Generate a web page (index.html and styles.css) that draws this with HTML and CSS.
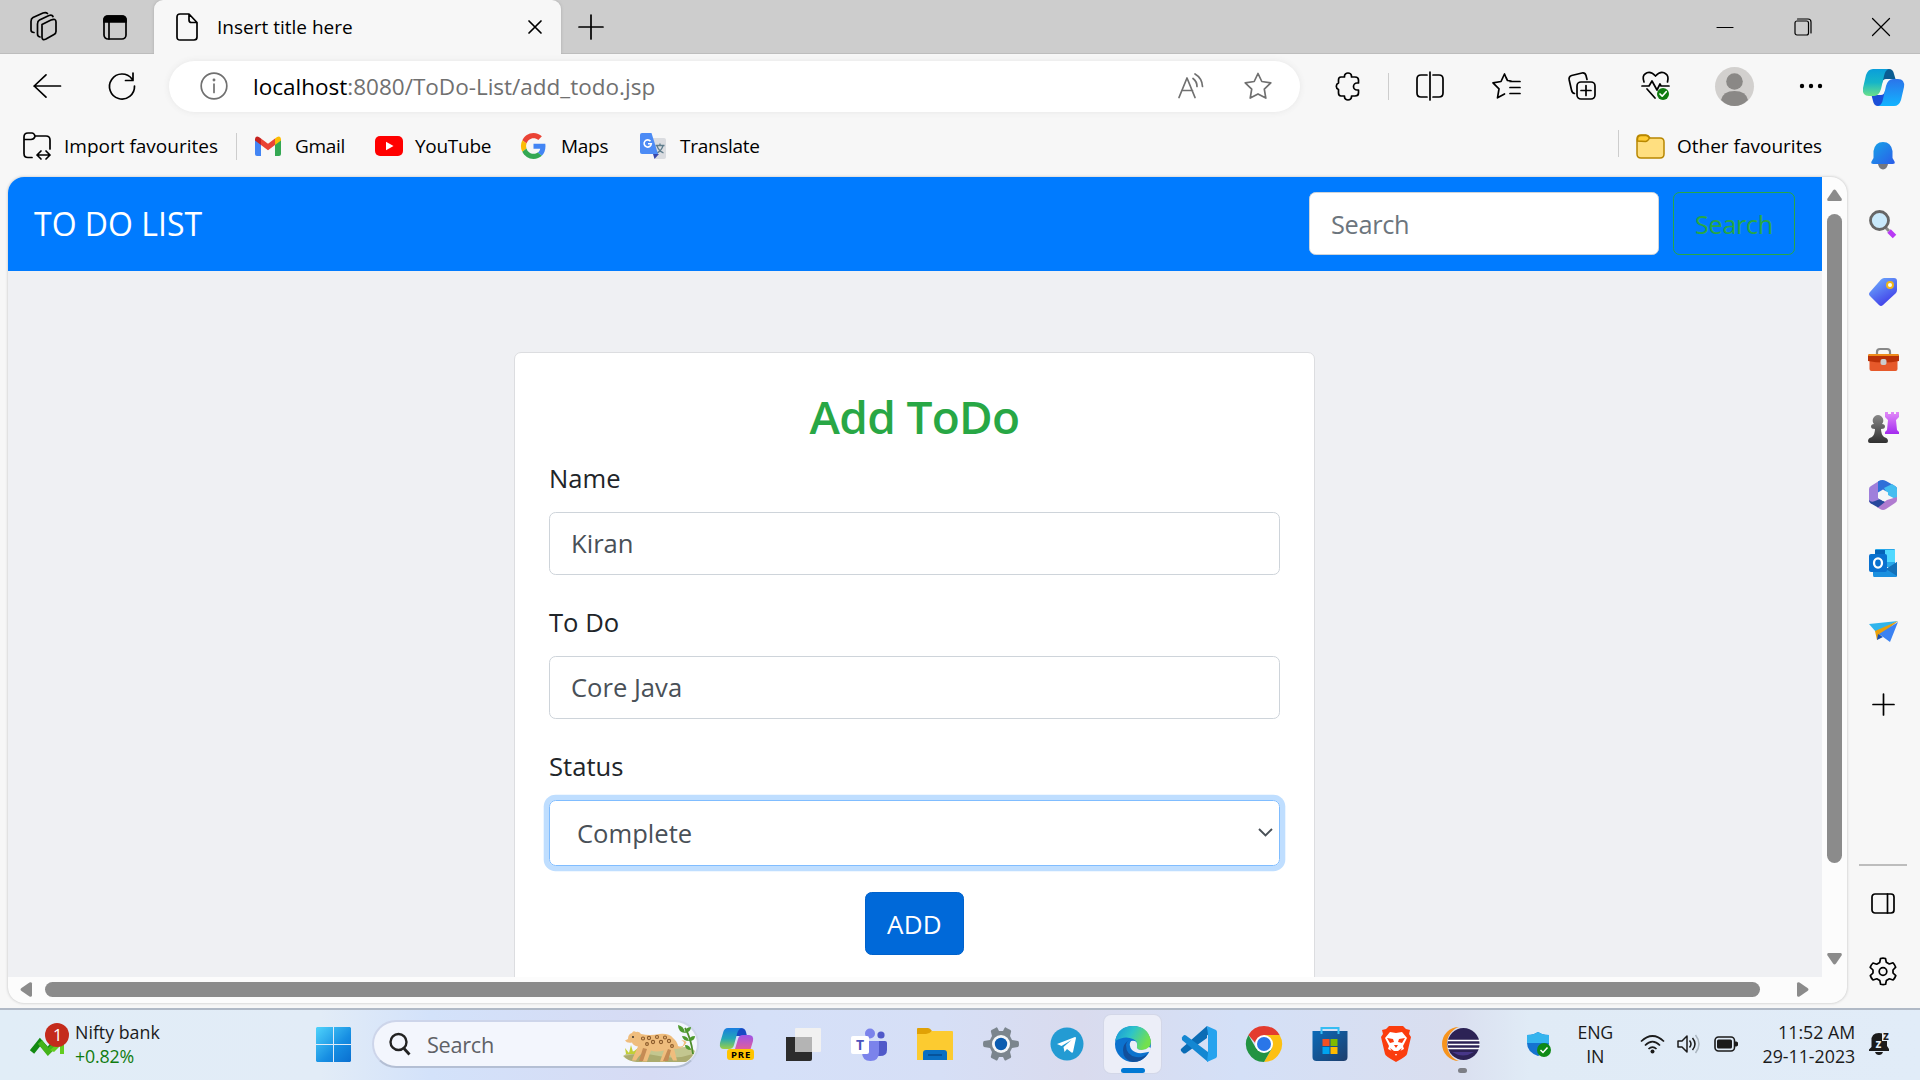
FILE: index.html
```html
<!DOCTYPE html>
<html lang="en">
<head>
<meta charset="utf-8">
<title>Insert title here</title>
<link rel="stylesheet" href="styles.css">
</head>
<body>
<header class="tabstrip">
  <svg class="ico workspaces" width="30" height="30" viewBox="0 0 30 30"><path d="M13 12.500 22 8q5-2 5 2v9.500q0 2-2 3l-8 4.500q-4 2-4-2z"/><path d="M8.500 22V12q0-3 2-4L20 3.500q3-1 4 1M11 25q-2.500-.5-2.500-3M2 18V9.500q0-3 2-4L14 1q3-1 4.500.5M5 20.500Q2 20.500 2 18"/></svg>
  <svg class="ico tabactions" width="24" height="25" viewBox="0 0 24 25"><rect x="1" y="1" width="22" height="23" rx="4"/><path d="M1 7V5q0-4 4-4h14q4 0 4 4v2z" fill="#000"/><path d="M6 7v17"/></svg>
  <div class="tab">
    <svg class="ico" width="22" height="28" viewBox="0 0 22 28"><path d="M4 1h9l8 8.500V24q0 3-3 3H4q-3 0-3-3V4q0-3 3-3zM13 1v6q0 2.500 2.500 2.500H21"/></svg>
    <span class="tab-title">Insert title here</span>
    <svg class="ico" width="14" height="14" viewBox="0 0 14 14"><path d="m1 1 12 12M13 1 1 13"/></svg>
  </div>
  <svg class="ico newtab" width="24" height="24" viewBox="0 0 24 24"><path d="M12 0v24M0 12h24"/></svg>
  <div class="winctl">
    <svg class="ico thin" width="18" height="18" viewBox="0 0 18 18"><path d="M1 9.500h16"/></svg>
    <svg class="ico thin" width="18" height="18" viewBox="0 0 18 18"><rect x="1" y="3" width="13.500" height="14" rx="2"/><path d="M3.500 1H14q3 0 3 3v11"/></svg>
    <svg class="ico thin" width="18" height="18" viewBox="0 0 18 18"><path d="m.5.5 17 17M17.500.5l-17 17"/></svg>
  </div>
</header>

<div class="window">
  <div class="main">
    <div class="toolbar">
      <svg class="ico back" width="28" height="24" viewBox="0 0 28 24"><path d="M27.500 12H1M13 .8 1.200 12 13 23.200"/></svg>
      <svg class="ico reload" width="28" height="28" viewBox="0 0 28 28"><path d="M24 7A12.500 12.500 0 1 0 26.500 14M25 1v7.500h-7.500"/></svg>
      <div class="address">
        <svg class="ico grey" width="28" height="28" viewBox="0 0 28 28"><circle cx="14" cy="14" r="12.800"/><path d="M14 12v8.500"/><circle cx="14" cy="8" r=".6"/></svg>
        <span class="url"><b>localhost</b>:8080/ToDo-List/add_todo.jsp</span>
        <svg class="ico grey read" width="26" height="26" viewBox="0 0 26 26"><path d="m1 24.500 8-19.500 8 19.500M4 17.500h10.500M15 5.500q4 3 4 8M17 1q7 4 7.500 12.500"/></svg>
        <svg class="ico grey" width="28" height="28" viewBox="0 0 28 28"><path d="m14 1.500 3.800 8 9 1.300-6.500 6.300 1.500 9-7.800-4.200-7.800 4.200 1.500-9-6.500-6.300 9-1.300z"/></svg>
      </div>
      <svg class="ico ext" width="25" height="28" viewBox="0 0 25 28"><path d="M6 5h3.500V4a3.500 3 0 0 1 7 0v1H20q3.500 0 3.500 3v3H22a3 3 0 0 0 0 7h1.500v3q0 3-3.500 3h-3.500v1a3.500 3 0 0 1-7 0v-1H6q-2.500 0-2.500-3v-3.500a3.500 3.500 0 0 1 0-6.500V8Q3.500 5 6 5z"/></svg>
      <i class="sep"></i>
      <div class="actions">
        <svg class="ico" width="28" height="28" viewBox="0 0 28 28"><path d="M11 3H5Q1 3 1 7v14q0 4 4 4h6M17 3h6q4 0 4 4v14q0 4-4 4h-6M14 0v28"/></svg>
        <svg class="ico" width="29" height="28" viewBox="0 0 29 28"><path d="m19 9-3.500-.5L14 5.500 12.500 2 9 9.500l-8 1.300 6 6-1.500 9 7-3.800M18 9.500h10M18 15.500h10M18 21.500h10"/></svg>
        <svg class="ico" width="28" height="28" viewBox="0 0 28 28"><path d="M6.500 21.500Q4 21 3.500 18L1.200 8q-.7-3.500 2.500-4.500L14 1q3-.6 4 2.500l1 4"/><rect x="9" y="10" width="18" height="17" rx="4"/><path d="M18 13.500v10M13 18.500h10"/></svg>
        <svg class="ico heart" width="29" height="30" viewBox="0 0 29 30"><path d="M3 11Q1 5 4 3q5-4 10.500 2Q20-1 25 3q3 2 1.500 8M1 15h7l3-5 5 9 3-6 1 2h8M6 18l8 9"/><circle cx="22" cy="23" r="6" fill="#107c10" stroke="none"/><path d="m19 23 2.200 2.200 4-4.500" stroke="#fff"/></svg>
        <svg width="39" height="39" viewBox="0 0 39 39"><circle cx="19.500" cy="19.500" r="19.500" fill="#d2d0ce"/><circle cx="19.500" cy="14.500" r="8.300" fill="#8a8886"/><path d="M6 33q2-9 13.500-9T33 33q-6 6-13.500 6T6 33z" fill="#8a8886"/></svg>
        <svg class="dots" width="24" height="6" viewBox="0 0 24 6"><circle cx="3" cy="3" r="2.200"/><circle cx="12" cy="3" r="2.200"/><circle cx="21" cy="3" r="2.200"/></svg>
      </div>
    </div>

    <nav class="favbar">
      <svg class="ico" width="29" height="28" viewBox="0 0 29 28"><path d="M9 25.500H5q-4 0-4-4V5q0-4 4-4h4q2 0 3 3h11q4 0 4 4v9M1 7.500h7q3 0 4-3M14 23h13M18 19l-4 4 4 4M23 19l4 4-4 4"/></svg>
      <span class="fav-import">Import favourites</span>
      <i class="sep"></i>
      <svg width="26" height="20" viewBox="0 0 26 20"><path d="M0 3v15q0 2 2 2h4V8z" fill="#4285f4"/><path d="M26 3v15q0 2-2 2h-4V8z" fill="#34a853"/><path d="M20 2.500V9l6-4.500V3q-1-4.500-6-.5z" fill="#fbbc04"/><path d="M6 9V2.500l7 5.300 7-5.300V9l-7 5.300z" fill="#ea4335"/><path d="M0 3v1.500L6 9V2.500Q1-1.500 0 3z" fill="#c5221f"/></svg>
      <span class="fav-gmail">Gmail</span>
      <svg width="28" height="20" viewBox="0 0 28 20"><rect width="28" height="20" rx="5" fill="#f00"/><path d="m11 5.800 7.500 4.200-7.500 4.200z" fill="#fff"/></svg>
      <span class="fav-youtube">YouTube</span>
      <svg width="25" height="26" viewBox="0 0 48 48" preserveAspectRatio="none"><path fill="#ea4335" d="M24 9.500c3.500 0 6.700 1.200 9.200 3.600l6.900-6.900C35.900 2.400 30.500 0 24 0 14.600 0 6.500 5.400 2.600 13.200l8 6.200C12.400 13.700 17.700 9.500 24 9.500z"/><path fill="#4285f4" d="M47 24.600c0-1.600-.2-3.100-.4-4.600H24v9h12.900c-.6 3-2.300 5.500-4.800 7.200l7.700 6C44.400 38 47 32 47 24.600z"/><path fill="#fbbc05" d="M10.500 28.600a14.500 14.500 0 0 1 0-9.200l-8-6.200a24 24 0 0 0 0 21.600z"/><path fill="#34a853" d="M24 48c6.500 0 11.900-2.100 15.900-5.800l-7.700-6c-2.200 1.500-4.900 2.300-8.200 2.300-6.300 0-11.600-4.200-13.500-9.900l-8 6.200C6.500 42.600 14.600 48 24 48z"/></svg>
      <span class="fav-maps">Maps</span>
      <svg width="26" height="26" viewBox="0 0 26 26"><path d="M9 5h15q2 0 2 2v17q0 2-2 2H15z" fill="#dadce0"/><path d="M15.500 12.500h9M20 10.500v2M17 12.800q1.500 5 6.500 7.200M23 12.800q-1.500 5-6.500 7.500" stroke="#5f7d8c" stroke-width="1.300" fill="none"/><path d="M13 21h6l-4.500 5z" fill="#3949ab"/><path d="M2 0h9.500L18 21H2q-2 0-2-2V2q0-2 2-2z" fill="#4c8bf5"/><path d="M10.500 8.200a3.600 3.600 0 1 0 .8 2.600H8" stroke="#fff" stroke-width="1.600" fill="none"/></svg>
      <span class="fav-translate">Translate</span>
      <i class="sep right"></i>
      <svg class="folder" width="29" height="25" viewBox="0 0 29 25"><path d="M1 5q0-4 4-4h5q2 0 4 3h10q4 0 4 4v12q0 4-4 4H5q-4 0-4-4z" fill="#ffdf80" stroke="#b88700" stroke-width="1.500"/><path d="M1.500 7V5q0-3.500 3.500-3.500h5q1.500 0 3.500 2.500-2 3.500-4 3.500z" fill="#fc3" stroke="#b88700" stroke-width="1.500"/></svg>
      <span class="fav-other">Other favourites</span>
    </nav>

    <div class="frame">
      <div class="viewport">
        <div class="navbar">
          <span class="brand">TO DO LIST</span>
          <input class="control search" placeholder="Search">
          <button class="btn outline">Search</button>
        </div>
        <div class="page">
          <form class="card">
            <h3>Add ToDo</h3>
            <label>Name</label>
            <input class="control" value="Kiran">
            <label>To Do</label>
            <input class="control" value="Core Java">
            <label>Status</label>
            <div class="selectbox">
              <span>Complete</span>
              <svg width="15" height="9" viewBox="0 0 15 9"><path d="m1 1 6.500 6.500L14 1" fill="none" stroke="#495057" stroke-width="1.900"/></svg>
            </div>
            <button class="btn primary" type="button">ADD</button>
          </form>
        </div>
      </div>
      <div class="vscroll">
        <svg width="15" height="12" viewBox="0 0 15 12"><path d="M6 1.500q1.500-2 3 0l5.500 8q1 2-1 2.500h-12q-2-.5-1-2.500z"/></svg>
        <i></i>
        <svg width="15" height="12" viewBox="0 0 15 12"><path d="M6 10.500q1.500 2 3 0l5.500-8q1-2-1-2.500h-12q-2 .5-1 2.500z"/></svg>
      </div>
      <div class="hscroll">
        <svg width="12" height="15" viewBox="0 0 12 15"><path d="M1.500 6q-2 1.500 0 3l8 5.500q2 1 2.500-1v-12q-.5-2-2.500-1z"/></svg>
        <i></i>
        <svg width="12" height="15" viewBox="0 0 12 15"><path d="M10.500 6q2 1.500 0 3l-8 5.500q-2 1-2.500-1v-12q.5-2 2.500-1z"/></svg>
      </div>
    </div>
  </div>

  <aside class="sidebar">
    <div><svg width="41" height="37" viewBox="0 0 41 37"><defs><linearGradient id="cpa" x1="0" y1="0" x2="0" y2="1"><stop offset="0" stop-color="#0a9edb"/><stop offset=".5" stop-color="#16b5c8"/><stop offset="1" stop-color="#6be08a"/></linearGradient><linearGradient id="cpb" x1="0" y1="0" x2="0" y2="1"><stop offset="0" stop-color="#2b74ea"/><stop offset="1" stop-color="#12b4ff"/></linearGradient></defs><path d="M19 0h7q4 0 5 5l1.500 5H23q-3 0-4 4z" fill="#0a5c92"/><path d="M22 37h-7q-4 0-5-5l-1.500-6H18q3 0 4-4z" fill="#1b4fd8"/><path d="M10 0h16q-4 1-5 7l-3 13q-2 7-7 7H6q-7 0-6-8L3 6q2-6 7-6z" fill="url(#cpa)"/><path d="M31 37H15q4-1 5-7l3-13q2-7 7-7h5q7 0 6 8l-3 13q-2 6-7 6z" fill="url(#cpb)"/></svg></div>
    <div><svg width="24" height="28" viewBox="0 0 24 28"><defs><linearGradient id="bl" x1="0" y1="0" x2="1" y2="1"><stop offset="0" stop-color="#16a5e8"/><stop offset="1" stop-color="#2b5ce8"/></linearGradient></defs><path d="M7 22h10q-1 5-5 5.500Q8 27 7 22z" fill="#77777d"/><path d="M12 0q8 0 9.500 9v7l2 3.500q1 2.500-2 2.500h-19q-3 0-2-2.500l2-3.500V9Q4 0 12 0z" fill="url(#bl)"/></svg></div>
    <div><svg width="28" height="28" viewBox="0 0 28 28"><path d="m16 17 4 4" stroke="#888" stroke-width="3"/><path d="m20 21 5.500 5.500" stroke="#b83af4" stroke-width="5"/><circle cx="10.500" cy="10.500" r="9" fill="#c9e9fb" stroke="#666" stroke-width="2.800"/></svg></div>
    <div><svg width="28" height="28" viewBox="0 0 28 28"><defs><linearGradient id="tg" x1="0" y1="0" x2=".6" y2="1"><stop offset="0" stop-color="#72b7ff"/><stop offset="1" stop-color="#403de8"/></linearGradient></defs><path d="M15 0h10q3 0 3 3v9q0 2-1.500 3.500L14 27q-2 2-4 0L1 18q-2-2 0-4L12 1.500Q13.500 0 15 0z" fill="url(#tg)"/><circle cx="21" cy="7" r="3" fill="#fff" stroke="#efb719" stroke-width="2"/></svg></div>
    <div><svg width="31" height="24" viewBox="0 0 31 24"><path d="M9 7V4q0-3 3-3h7q3 0 3 3v3" fill="none" stroke="#888" stroke-width="2.200"/><path d="M1.500 12h28v9q0 2-2 2h-24q-2 0-2-2z" fill="#e6592a"/><path d="M2 6h27q2 0 2 2v5q-15 3-31 0V8q0-2 2-2z" fill="#b93108"/><path d="M2 6h27q2 0 2 2H0q0-2 2-2z" fill="#ee8b1b"/><rect x="12.500" y="11" width="6" height="6" rx="2" fill="#ccc"/></svg></div>
    <div><svg width="31" height="31" viewBox="0 0 31 31"><defs><linearGradient id="pw" x1="0" y1="0" x2="0" y2="1"><stop offset="0" stop-color="#888"/><stop offset="1" stop-color="#303030"/></linearGradient><linearGradient id="rk" x1="0" y1="0" x2="0" y2="1"><stop offset="0" stop-color="#e28af8"/><stop offset="1" stop-color="#a32aef"/></linearGradient></defs><path d="M17 0h3v2h3V0h3v2h2V0h3v5l-3 3 1 10 2 2v2H17v-2l2-2 1-10-3-3z" fill="url(#rk)"/><path d="M10 3a5.500 5.500 0 0 1 4 9q3 0 3 2.500T13 17q0 5 3 8 4 1 4 4 0 2-2 2H2q-2 0-2-2 0-3 4-4 3-3 3-8-4 0-4-2.500T6 12a5.500 5.500 0 0 1 4-9z" fill="url(#pw)"/></svg></div>
    <div><svg width="28" height="30" viewBox="0 0 28 30"><path d="M0 9q0-2 2-3l8-5v20l-7 3q-3-1-3-4z" fill="#9f7fdb"/><path d="M9 1.500Q13-1 17 1l9 5q2 1 2 3v2L9 14z" fill="#2f6fd8"/><path d="m15 8 8-4 3 2q2 1 2 3v11l-9-5z" fill="#45bdf0"/><path d="m28 17v3q0 2-2 3l-9 6q-3 2-6 0l-3-2 10-7z" fill="#b07bd0"/><path d="M0 20q2 3 6 1l5-2 5 3-7 5.500L2 23.500Q0 22 0 20z" fill="#27479c"/><path d="m14 9.500 5 3v5.500l-5 3-5-3v-5.500z" fill="#f7f7f7"/></svg></div>
    <div><svg width="28" height="28" viewBox="0 0 28 28"><path d="M7 0h18q1 0 1 1v17H6V1q0-1 1-1z" fill="#28a8ea"/><path d="M16 1h10v12H16z" fill="#50d9ff"/><path d="M6 1h10v5H6z" fill="#0464b8"/><path d="M28 13v14q0 1-1 1H5q-1 0-1-2V14l13 6z" fill="#1b90df"/><path d="m28 13-11 7 11 7z" fill="#1470b8"/><rect y="5" width="18" height="18" rx="2" fill="#0a71cf"/><ellipse cx="9" cy="14" rx="4" ry="4.600" fill="none" stroke="#fff" stroke-width="2.300"/></svg></div>
    <div><svg width="29" height="21" viewBox="0 0 29 21"><path d="M0 3 29 0 7 11z" fill="#30b5ec"/><path d="M29 0 6 10l2 9 5-6z" fill="#eba008"/><path d="m8 19 1-6 5 3z" fill="#1650b8"/><path d="M29 1 10 13l11 8z" fill="#3b82f2"/></svg></div>
    <div class="plus"><svg class="ico" width="21" height="21" viewBox="0 0 21 21"><path d="M10.500 0v21M0 10.500h21"/></svg></div>
    <hr>
    <div><svg class="ico" width="24" height="21" viewBox="0 0 24 21"><rect x="1" y="1" width="22" height="19" rx="3"/><path d="M16.500 1v19"/></svg></div>
    <div><svg class="ico" width="28" height="29" viewBox="0 0 28 29"><path d="M11.500 1.500q2.500-.8 5 0l.8 3.800 3 1.700 3.700-1.200q1.800 1.800 2.700 4.400L24 13v3l2.800 2.600q-.9 2.500-2.700 4.400l-3.700-1.200-3 1.700-.8 3.800q-2.500.8-5 0l-.8-3.800-3-1.700L4 23q-1.800-1.900-2.700-4.400L4 16v-3l-2.800-2.600Q2.200 7.800 4 6l3.700 1.200 3-1.700z"/><circle cx="14" cy="14.500" r="3.800"/></svg></div>
  </aside>
</div>

<footer class="taskbar">
  <div class="widget">
    <svg width="40" height="36" viewBox="0 0 40 36"><path d="m2 29 8-10 8 9 9-12" fill="none" stroke="#128a12" stroke-width="5.500"/><path d="m10 19 8 10 8-8" fill="none" stroke="#43b31a" stroke-width="5.500"/><path d="M20 27 34 15v16h-4v-8l-6 6z" fill="#63cc20"/><circle cx="27" cy="12" r="12" fill="#c42b1c"/><text x="23" y="17.500" fill="#fff" font-size="16.500">1</text></svg>
    <div class="lines"><span class="nifty">Nifty bank</span><span class="gain">+0.82%</span></div>
  </div>
  <svg class="start" width="35" height="35" viewBox="0 0 35 35"><defs><linearGradient id="wn" x1="0" y1="0" x2="1" y2="1"><stop offset="0" stop-color="#4fd3fb"/><stop offset=".6" stop-color="#168de2"/><stop offset="1" stop-color="#0a6fd0"/></linearGradient></defs><path d="M1 0h16v17H0V1zM18 0h16l1 1v16H18zM0 18h17v17H1l-1-1zM18 18h17v16l-1 1H18z" fill="url(#wn)"/></svg>
  <div class="tsearch">
    <svg width="22" height="23" viewBox="0 0 22 23"><circle cx="9.500" cy="9" r="8" fill="none" stroke="#222" stroke-width="2.400"/><path d="m15 15.500 5.500 6" stroke="#222" stroke-width="2.800"/></svg>
    <span>Search</span>
    <svg class="leopard" width="72" height="40" viewBox="0 0 72 40"><path d="M0 32q8-7 25-6l37-3q6 0 10 4-2 7-9 11H14Q4 37 0 32z" fill="#c3c68f"/><path d="M1 32q18-4 35 0t34-2q-3 6-8 8H14Q4 37 1 32z" fill="#94904f" opacity=".5"/><path d="m3 30-1-6 4 5 2-8 2 7 5-4-2 6z" fill="#c2ce37"/><path d="M5 15q0-5 4-6 1-3 4-1 3-1 5 2 9 2 18 0 10-1 14 4 4 3 5 8 5 2 6-3 0-2-3-2.500 4-1 5.500 2Q60 25 53 25l-2-.5 1 4 2 8h-4l-4-8-4 9h-5l4-11q-8 2-13 0l-4 11h-5l2-11-6 7-2 3h-4l1-3 5-11q-5-1-6-4-5 1-7-2z" fill="#efbd7d"/><path d="m24 25-4 12h-4l4-13zM45 25l-5 12h5l3-11z" fill="#c58b54"/><g fill="none" stroke="#8a5a2b" stroke-width="1.100"><circle cx="20" cy="14.500" r="1.500"/><circle cx="26" cy="14" r="1.600"/><circle cx="30" cy="18" r="1.600"/><circle cx="34" cy="13" r="1.500"/><circle cx="38" cy="18" r="1.600"/><circle cx="42" cy="13.500" r="1.500"/><circle cx="46" cy="17" r="1.600"/><circle cx="49" cy="22" r="1.400"/><circle cx="24" cy="20" r="1.400"/></g><circle cx="10" cy="13" r=".9" fill="#222"/><path d="M70 30Q68 14 62 4" stroke="#4d8d2c" stroke-width="1.800" fill="none"/><path d="M62 9q-7-1-7-8 6 1 7 8 0-6 6-6 0 5-6 6zM66 17q-6 0-7-5 6 0 7 5 0-5 6-5 0 5-6 5zM68 26q-6 0-6-5 5 0 6 5z" fill="#4e9a2f"/></svg>
  </div>
  <div class="apps">
    <div><svg width="36" height="36" viewBox="0 0 36 36"><defs><linearGradient id="pa" x1="0" y1="0" x2="0" y2="1"><stop offset="0" stop-color="#197de0"/><stop offset=".5" stop-color="#23a7b7"/><stop offset="1" stop-color="#9dcf45"/></linearGradient><linearGradient id="pb" x1="0" y1="0" x2="0" y2="1"><stop offset="0" stop-color="#9d54e8"/><stop offset="1" stop-color="#fc627b"/></linearGradient></defs><path d="M17 2h5q4 0 5 4l1 4H17z" fill="#1749c4"/><path d="M9 2h14q-4 1-5 6l-3 11q-1 4-5 4H5q-5 0-4-6L4 7q1-5 5-5z" fill="url(#pa)"/><path d="M25 29H11q4-1 5-6l3-10q1-4 5-4h6q5 0 4 6l-3 10q-1 4-6 4z" fill="url(#pb)"/><rect x="8" y="23" width="27" height="11" rx="3" fill="#ffc400"/><text x="12" y="32" font-size="9.500" font-weight="700" textLength="19">PRE</text></svg></div>
    <div><svg width="36" height="36" viewBox="0 0 36 36"><path d="M1 11h26v22q0 2-2 2H1z" fill="#2c2c2c"/><rect x="10" y="2" width="26" height="24" rx="1" fill="#f1f1f1"/><path d="M10 11h17v15H10z" fill="#b4b4b4"/></svg></div>
    <div><svg width="36" height="36" viewBox="0 0 36 36"><circle cx="19" cy="7.500" r="5" fill="#7b83eb"/><circle cx="30" cy="9" r="3.600" fill="#5059c9"/><path d="M26 15h8q2 0 2 2v7q0 6-7 6h-5z" fill="#5059c9"/><path d="M11 15h17v11q0 9-8.500 9T11 26z" fill="#7b83eb"/><rect x="0" y="10" width="18" height="18" rx="2" fill="#fff"/><text x="5" y="24" font-size="14" font-weight="700" fill="#4b53bc">T</text></svg></div>
    <div><svg width="36" height="36" viewBox="0 0 36 36"><path d="M0 3q0-1 1-1h10q2 0 4 3l-3 5H0z" fill="#e0a106"/><path d="M0 8h9q3 0 6-3h20q1 0 1 1v28H0z" fill="#fccb30"/><path d="M6 34v-7q0-3 3-3h18q3 0 3 3v7z" fill="#0a6fc2"/><path d="M11 29h14" stroke="#064a8c" stroke-width="1.500"/></svg></div>
    <div><svg width="36" height="36" viewBox="0 0 36 36"><path d="M12.500 2q1-1.500 2 0l1.500 3h4l1.500-3q1-1.500 2 0l4 2q1 1 .5 2L27 10l2 4 6 1q1 0 1 3t-1 3l-6 1-2 4 1 4q.5 1-.5 2l-4 2q-1 1-2 0l-1.500-3h-4l-1.500 3q-1 1-2 0l-4-2q-1-1-.5-2l1-4-2-4-6-1q-1 0-1-3t1-3l6-1 2-4-1-4q-.5-1 .5-2z" fill="#7b858d"/><circle cx="18" cy="18" r="9" fill="#f4f6f8"/><circle cx="18" cy="18" r="6.200" fill="#0b5cb0"/></svg></div>
    <div><svg width="34" height="34" viewBox="0 0 34 34"><circle cx="17" cy="17" r="16.500" fill="#239bd3"/><path d="m7 17 18-7q1 0 1 1l-3 14q-.5 1-1.500.5L17 22l-2.500 3-1-5 8-7-10 6z" fill="#fff"/></svg></div>
    <div class="active"><svg width="36" height="36" viewBox="0 0 36 36"><defs><linearGradient id="ed" x1="0" y1="0" x2="1" y2=".4"><stop offset="0" stop-color="#1691dc"/><stop offset=".5" stop-color="#2ec4c8"/><stop offset="1" stop-color="#73e04e"/></linearGradient></defs><circle cx="18" cy="18" r="18" fill="#0c72ce"/><path d="M0 15Q3 0 18 0t18 15q0 9-9 9-6 0-5-4 1-5-4-7-8-4-18 2z" fill="url(#ed)"/><path d="M11 19q0 10 10 12 8 1 12-4-5 9-15 9Q8 34 8 24q0-6 6-10-3 2-3 5z" fill="#124f9b"/><path d="M16 15q-3 4 1 9 5 5 16 2 3-1 1 2 1-2 2-6l-2-1q-3 3-7 3-6 0-5-4 1-6-6-5z" fill="#eceef8"/></svg></div>
    <div><svg width="36" height="36" viewBox="0 0 36 36"><path d="m5 24 21-18v6L5 27q-2 1-3 0l-2-2q-1-2 1-3L26 0l2 8z" fill="#0a6cb5"/><path d="M1 13q-1-1 1-3 1.500-1.500 3-.5L27 26v10L1 14z" fill="#1487d2"/><path d="m26 0 9 4q1 1 1 2v24q0 1-1 2l-9 4 1-9V9z" fill="#26a3ee"/></svg></div>
    <div><svg width="36" height="36" viewBox="0 0 36 36"><path d="M2.400 9a18 18 0 0 1 31.200 0H18z" fill="#e33b2e"/><path d="M33.600 9A18 18 0 0 1 18 36l7.800-13.500L18 9z" fill="#fcc012"/><path d="M2.400 9A18 18 0 0 0 18 36l7.800-13.500L10.200 22.500z" fill="#229342"/><path d="M2.400 9h15.600v9h-7.800z" fill="#e33b2e"/><circle cx="18" cy="18" r="9" fill="#fff"/><circle cx="18" cy="18" r="7" fill="#2a76e8"/></svg></div>
    <div><svg width="36" height="36" viewBox="0 0 36 36"><defs><linearGradient id="st" x1="0" y1="0" x2="1" y2="1"><stop offset="0" stop-color="#0a6ab9"/><stop offset="1" stop-color="#1e3e6c"/></linearGradient></defs><path d="M.5 5h35v26q0 4-4 4h-27q-4 0-4-4z" fill="url(#st)"/><path d="M9.500 8V2h17v6" fill="none" stroke="#36bdf3" stroke-width="2"/><path d="M10.500 13h7v7h-7z" fill="#f25022"/><path d="M18.500 13h7v7h-7z" fill="#7fba00"/><path d="M10.500 21h7v7h-7z" fill="#00a4ef"/><path d="M18.500 21h7v7h-7z" fill="#ffb900"/></svg></div>
    <div><svg width="30" height="36" viewBox="0 0 30 36"><path d="M8 0h14l3 3 4 1-1 4 2 3-4 17q0 2-11 8Q4 30 4 28L0 11l2-3-1-4 4-1z" fill="#fb3d0e"/><path d="m9 6 6 1 6-1 5 6-4 8 1 3-6 3-2 4-2-4-6-3 1-3-4-8z" fill="#fff"/><path d="m6 12 6 1 1 3-4 1zM24 12l-6 1-1 3 4 1zM13 19h4l-2 3zM9 22l4 3h4l4-3-3 6h-6z" fill="#fb3d0e"/><path d="m13 8 2 8 2-8z" fill="#fff"/></svg></div>
    <div class="running"><svg width="36" height="36" viewBox="0 0 36 36"><path d="M15 1A17 17 0 0 0 15 35 18 18 0 0 1 15 1z" fill="#f7941e"/><circle cx="19.500" cy="18" r="16" fill="#2c2255"/><path d="M8 26q11 7 22 0z" fill="#473788"/><path d="M4 14.500h32M4 18.500h32M4 22.500h32" stroke="#fff" stroke-width="1.700"/></svg></div>
  </div>
  <div class="tray">
    <svg class="shield" width="24" height="25" viewBox="0 0 24 25"><path d="m11 0 4 2q3 1 7 1v8q0 9-11 13Q0 20 0 11V3q4 0 7-1z" fill="#1573d0"/><path d="m11 0 4 2q3 1 7 1v8H0V3q4 0 7-1z" fill="#34b4ee"/><circle cx="17" cy="18" r="7" fill="#0e8a16"/><path d="m13.500 18 2.500 2.500 4.500-5" fill="none" stroke="#fff" stroke-width="1.500"/></svg>
    <div class="lines lang"><span>ENG</span><span class="in">IN</span></div>
    <svg width="25" height="19" viewBox="0 0 25 19"><path d="M1 6.500q11.500-11 23 0M5 10.500q7.500-7.500 15 0M8.500 14q4-4 8 0" fill="none" stroke="#1b1b1b" stroke-width="1.700"/><circle cx="12.500" cy="16.500" r="2" fill="#1b1b1b"/></svg>
    <svg width="25" height="20" viewBox="0 0 25 20"><path d="M1 7h4l5-5v16l-5-5H1z" fill="none" stroke="#1b1b1b" stroke-width="1.500" stroke-linejoin="round"/><path d="M12.500 6.500q3 3.500 0 7M15.500 4q5 6 0 12" fill="none" stroke="#1b1b1b" stroke-width="1.500"/><path d="M18.500 1q7 9 0 18" fill="none" stroke="#aab5bf" stroke-width="1.500"/></svg>
    <svg width="24" height="16" viewBox="0 0 24 16"><rect x="1" y="1" width="19.500" height="14" rx="3.500" fill="none" stroke="#1b1b1b" stroke-width="1.600"/><rect x="3" y="3.500" width="15" height="9" rx="1.500" fill="#1b1b1b"/><path d="M21 5.500h1.500l1.500 1v3l-1.500 1H21z" fill="#1b1b1b"/></svg>
    <div class="lines clock"><span>11:52 AM</span><span>29-11-2023</span></div>
    <svg class="dnd" width="22" height="24" viewBox="0 0 22 24"><path d="M10 1Q2 1 2.500 9v6L0 17.500V19h20v-2l-2-3V9q0-8-8-8zM6 20h8q-1 3-4 3t-4-3z" fill="#1b1b1b"/><path d="M13 0h9v9h-9z" fill="#e1ecf8"/><text x="6.500" y="15.500" font-size="12" font-weight="700" fill="#e6f0f8">z</text><text x="14" y="8" font-size="12" font-weight="700" fill="#1b1b1b">z</text></svg>
  </div>
</footer>
</body>
</html>
```
FILE: styles.css
```css
* { box-sizing: border-box; }
body {
  margin: 0;
  width: 1920px;
  height: 1080px;
  overflow: hidden;
  display: flex;
  flex-direction: column;
  background: #f7f7f7;
  color: #000;
  font-family: "Open Sans", "Noto Sans", sans-serif;
  font-size: 19px;
  letter-spacing: -0.015em;
  white-space: nowrap;
}
svg { display: block; flex: none; overflow: visible; }
span { flex: none; }
.ico { fill: none; stroke: #000; stroke-width: 1.7; stroke-linejoin: round; stroke-linecap: round; }
.ico.thin { stroke-width: 1.2; }
.ico.grey { stroke: #707070; }
.sep { flex: none; width: 1px; height: 27px; background: #cdcdcd; }

/* Tab strip */
.tabstrip {
  flex: none;
  height: 54px;
  display: flex;
  align-items: center;
  background: #cdcdcd;
  box-shadow: inset 0 -1px #bdbdbd;
}
.workspaces { margin-left: 29px; }
.tabactions { margin-left: 44px; }
.tab {
  width: 407px;
  height: 54px;
  margin-left: 27px;
  padding: 0 19px 0 22px;
  display: flex;
  align-items: center;
  background: #f7f7f7;
  border-radius: 9px 9px 0 0;
  box-shadow: 0 0 3px #aaa;
  clip-path: inset(0 -3px 0 -3px);
}
.tab-title { margin: 0 auto 0 19px; letter-spacing: 0; }
.newtab { margin: -1px 0 0 18px; }
.winctl { margin: 0 30px 0 auto; display: flex; gap: 60px; }

/* Browser window */
.window { flex: none; height: 955px; display: flex; }
.main { width: 1848px; display: flex; flex-direction: column; }
.toolbar { flex: none; height: 64px; display: flex; align-items: center; }
.back { margin-left: 33px; }
.reload { margin-left: 47px; }
.address {
  width: 1134px;
  height: 51px;
  margin-left: 33px;
  padding: 0 28px 0 31px;
  display: flex;
  align-items: center;
  background: #fff;
  border-radius: 26px;
  box-shadow: 0 0 6px #e6e6e6;
}
.url { margin: 0 auto 0 25px; font-size: 22.500px; letter-spacing: 0; color: #707070; }
.url b { font-weight: 400; color: #000; }
.read { margin-right: 40px; }
.ext { margin: 0 28px 0 35px; }
.actions { display: grid; grid-template-columns: repeat(6, 76px); align-items: center; justify-items: center; margin-left: 3px; }
.heart { margin-right: 6px; }
.dots { margin-left: 2px; }

.favbar { flex: none; height: 58px; padding-bottom: 2px; display: flex; align-items: center; }
.favbar > svg:first-child { margin-left: 23px; }
.favbar span { margin-top: -1px; }
.fav-import { width: 172px; margin-left: 12px; letter-spacing: 0; }
.fav-import + .sep { margin-right: 18px; }
.fav-gmail { width: 80px; margin-left: 14px; }
.fav-youtube { width: 106px; margin-left: 12px; }
.fav-maps { width: 79px; margin-left: 15px; }
.fav-translate { margin-left: 14px; }
.sep.right { margin: -5px 17px 0 auto; }
.fav-other { width: 171px; margin-left: 12px; letter-spacing: 0; }

/* Page frame with scrollbars */
.frame {
  width: 1839px;
  height: 826px;
  margin: 1px 0 0 8px;
  display: grid;
  grid-template: 800px 26px / 1814px 25px;
  overflow: hidden;
  background: #fcfcfc;
  border-radius: 16px;
  box-shadow: 0 0 3px #bbb;
}
.viewport { background: #eff0f3; overflow: hidden; }
.navbar {
  height: 94px;
  padding: 0 27px 1px 26px;
  display: flex;
  align-items: center;
  background: #007bff;
}
.brand { margin-right: auto; color: #fff; font-size: 32px; letter-spacing: 0; }
.control {
  width: 100%;
  height: 63px;
  padding: 0 21px;
  border: 1px solid #ced4da;
  border-radius: 6.600px;
  background: #fff;
  color: #495057;
  font: 25.600px "Open Sans", sans-serif;
  letter-spacing: 0;
}
.control::placeholder { color: #6c757d; opacity: 1; }
.navbar .search { width: 350px; font-size: 25.300px; letter-spacing: -0.012em; }
.btn {
  height: 63px;
  border: 1px solid;
  border-radius: 6.600px;
  background: none;
  font: 25.300px "Open Sans", sans-serif;
  letter-spacing: -0.015em;
}
.outline { width: 122px; margin-left: 14px; padding: 0; border-color: #28a745; color: #28a745; }
.page { padding: 81px 0 0 506px; }
.card {
  width: 801px;
  height: 700px;
  padding: 34px 34px 0;
  display: flex;
  flex-direction: column;
  background: #fff;
  border: 1px solid #dcdde0;
  border-radius: 7px;
  color: #212529;
  font-size: 25.600px;
  letter-spacing: 0;
}
h3 {
  margin: 0;
  height: 68px;
  line-height: 59px;
  font-size: 46px;
  font-weight: 600;
  letter-spacing: -0.015em;
  text-align: center;
  color: #28a745;
}
.card label { height: 57px; padding-top: 4px; line-height: 40px; }
.card .control { margin-bottom: 26px; flex: none; }
.card .control + label { height: 55px; padding-top: 2px; }
.selectbox {
  flex: none;
  height: 66px;
  padding: 0 6px 0 27px;
  display: flex;
  align-items: center;
  justify-content: space-between;
  border: 1px solid #80bdff;
  border-radius: 6.600px;
  box-shadow: 0 0 0 5.300px #bfdeff;
  color: #495057;
}
.selectbox span { margin-top: 1px; }
.selectbox svg { margin-top: -1px; }
.primary { align-self: center; width: 99px; margin-top: 26px; padding: 0; background: #0069d9; border-color: #0062cc; color: #fff; font-size: 26px; letter-spacing: 0.01em; }

.vscroll, .hscroll { display: flex; align-items: center; fill: #8b8b8b; }
.vscroll { flex-direction: column; padding-top: 12px; }
.vscroll i { width: 15px; height: 649px; margin: 13px 0 90px; border-radius: 8px; background: #8b8b8b; }
.hscroll { grid-column: 1 / 3; padding: 0 0 1px 12px; }
.hscroll i { width: 1715px; height: 15px; margin: 0 37px 0 13px; border-radius: 8px; background: #8b8b8b; }

/* Edge sidebar */
.sidebar { width: 72px; padding-right: 2px; display: flex; flex-direction: column; align-items: center; }
.sidebar div { flex: none; height: 67.900px; display: flex; align-items: center; }
.sidebar .plus { margin-top: 6px; }
.sidebar hr { width: 48px; height: 2px; margin: 125px 0 4px; border: 0; background: #bdbdbd; }

/* Taskbar */
.taskbar {
  flex: none;
  height: 72px;
  margin-top: -1px;
  padding-bottom: 2px;
  border-top: 2px solid #b0b9c6;
  display: flex;
  align-items: center;
  background: linear-gradient(90deg, #e1edf7 0, #e2ecf7 320px, #d3e2fa 430px, #d6dbf4 650px, #d5e0f8 760px, #d6dff6 940px, #d9dbee 1080px, #d4e0f7 1240px, #d9deef 1450px, #e0ebf6 1530px, #e1ecf8 100%);
  color: #1b1b1b;
  font-size: 17.800px;
}
.widget { width: 286px; margin-left: 30px; display: flex; align-items: center; letter-spacing: 0; }
.widget > svg { margin: 0 5px 6px 0; }
.lines { display: flex; flex-direction: column; line-height: 24px; }
.gain { letter-spacing: -0.01em; color: #107c10; }
.start { margin-right: 21px; }
.tsearch {
  width: 327px;
  height: 48px;
  padding: 0 2px 0 15px;
  display: flex;
  align-items: center;
  background: #f3f6fd;
  border: 2px solid #cdd5ea;
  border-bottom-color: #b4bfd4;
  border-radius: 24px;
  font-size: 21.700px;
  color: #5f6166;
}
.tsearch span { margin: 0 auto 0 16px; }
.apps { display: grid; grid-template-columns: repeat(12, 65.950px); height: 58px; margin-left: 5px; }
.apps div { display: flex; align-items: center; justify-content: center; position: relative; }
.apps .active { width: 57px; justify-self: center; border-radius: 7px; background: #eceef8; box-shadow: 0 0 0 1px #d3d7e8; }
.active::after, .running::after {
  content: "";
  position: absolute;
  bottom: 0;
  width: 24px;
  height: 5px;
  border-radius: 3px;
  background: #0078d4;
}
.running::after { width: 9px; background: #7d7f86; }
.tray { margin-left: 32px; display: flex; align-items: center; }
.lang { width: 34px; margin: 0 28px 0 27px; align-items: center; }
.tray > svg { margin-right: 12px; }
.tray > .shield { margin-right: 0; }
.clock { width: 93px; margin: 0 14px 0 12px; align-items: flex-end; letter-spacing: 0; }
```
